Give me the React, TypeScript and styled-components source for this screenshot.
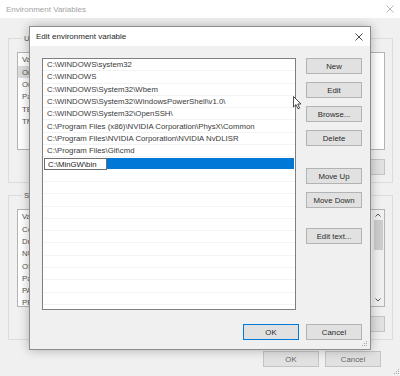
import React from 'react'
import styled, { createGlobalStyle } from 'styled-components'

const userVars = ['OneDrive', 'OneDriveConsumer', 'Path', 'TEMP', 'TMP']

const systemVars = [
  'ComSpec',
  'DriverData',
  'NUMBER_OF_PROCESSORS',
  'OS',
  'Path',
  'PATHEXT',
  'PROCESSOR_ARCHITECTURE',
]

const paths = [
  'C:\\WINDOWS\\system32',
  'C:\\WINDOWS',
  'C:\\WINDOWS\\System32\\Wbem',
  'C:\\WINDOWS\\System32\\WindowsPowerShell\\v1.0\\',
  'C:\\WINDOWS\\System32\\OpenSSH\\',
  'C:\\Program Files (x86)\\NVIDIA Corporation\\PhysX\\Common',
  'C:\\Program Files\\NVIDIA Corporation\\NVIDIA NvDLISR',
  'C:\\Program Files\\Git\\cmd',
]

const EMPTY_ROWS = 12

const CloseIcon = ({ color }: { color: string }) => (
  <svg width="8" height="8" viewBox="0 0 8 8">
    <path d="M0.5 0.5 L7.5 7.5 M7.5 0.5 L0.5 7.5" stroke={color} strokeWidth="0.9" />
  </svg>
)

const Grip = () => (
  <svg width="6" height="6" viewBox="0 0 6 6">
    <g fill="#a8a8a8">
      <rect x="4" y="0" width="1" height="1" />
      <rect x="2" y="2" width="1" height="1" />
      <rect x="4" y="2" width="1" height="1" />
      <rect x="0" y="4" width="1" height="1" />
      <rect x="2" y="4" width="1" height="1" />
      <rect x="4" y="4" width="1" height="1" />
    </g>
  </svg>
)

const Chevron = ({ up }: { up?: boolean }) => (
  <svg width="6" height="4" viewBox="0 0 6 4">
    <path d={up ? 'M0.5 3.5 L3 1 L5.5 3.5' : 'M0.5 0.5 L3 3 L5.5 0.5'} stroke="#555" strokeWidth="1" fill="none" />
  </svg>
)

const Pointer = () => (
  <svg width="10" height="14" viewBox="0 0 10 14">
    <path
      d="M0.5 0.5 L0.5 11 L3 8.6 L5 12.8 L6.6 12.1 L4.7 8 L8 8 Z"
      fill="#fff"
      stroke="#222"
      strokeWidth="0.8"
      strokeLinejoin="round"
    />
  </svg>
)

export default function App() {
  return (
    <Desktop>
      <GlobalStyle />
      <BgWindow>
        <BgTitleBar>
          <span>Environment Variables</span>
          <CloseIcon color="#b0b0b0" />
        </BgTitleBar>
        <BgBody>
          <Group>
            <Legend>User variables</Legend>
            <VarList>
              <VarListBody>
                <HeaderRow>
                  <VarCell>Variable</VarCell>
                </HeaderRow>
                {userVars.map((name, i) => (
                  <VarRow key={name}>
                    <VarCell $selected={i === 0}>{name}</VarCell>
                  </VarRow>
                ))}
              </VarListBody>
            </VarList>
            <GroupButtons>
              <BgButton>Delete</BgButton>
            </GroupButtons>
          </Group>
          <Group $spaced>
            <Legend>System variables</Legend>
            <VarList>
              <VarListBody>
                <HeaderRow>
                  <VarCell>Variable</VarCell>
                </HeaderRow>
                {systemVars.map(name => (
                  <VarRow key={name}>
                    <VarCell>{name}</VarCell>
                  </VarRow>
                ))}
              </VarListBody>
              <ScrollBar>
                <Chevron up />
                <Thumb />
                <ScrollSpacer />
                <Chevron />
              </ScrollBar>
            </VarList>
            <GroupButtons>
              <BgButton>Delete</BgButton>
            </GroupButtons>
          </Group>
          <BgFooter>
            <BgButton>OK</BgButton>
            <BgButton>Cancel</BgButton>
          </BgFooter>
        </BgBody>
        <CornerGrip $right={0} $bottom={1}>
          <Grip />
        </CornerGrip>
      </BgWindow>

      <Dialog>
        <DialogTitleBar>
          <span>Edit environment variable</span>
          <CloseIcon color="#333" />
        </DialogTitleBar>
        <DialogBody>
          <MainRow>
            <PathList>
              {paths.map(p => (
                <PathRow key={p}>{p}</PathRow>
              ))}
              <EditRow>
                <EditBox>C:\MinGW\bin</EditBox>
                <SelectionFill />
              </EditRow>
              {Array.from({ length: EMPTY_ROWS }).map((_, i) => (
                <PathRow key={i} />
              ))}
            </PathList>
            <ButtonColumn>
              <WinButton>New</WinButton>
              <WinButton>Edit</WinButton>
              <WinButton>Browse...</WinButton>
              <WinButton>Delete</WinButton>
              <WinButton $push={14}>Move Up</WinButton>
              <WinButton>Move Down</WinButton>
              <WinButton $push={12}>Edit text...</WinButton>
            </ButtonColumn>
          </MainRow>
          <DialogFooter>
            <WinButton $default>OK</WinButton>
            <WinButton>Cancel</WinButton>
          </DialogFooter>
        </DialogBody>
        <CornerGrip $right={2} $bottom={2}>
          <Grip />
        </CornerGrip>
      </Dialog>

      <MouseCursor>
        <Pointer />
      </MouseCursor>
    </Desktop>
  )
}

const GlobalStyle = createGlobalStyle`
  html, body {
    margin: 0;
    padding: 0;
    background: #f0f0f0;
  }
  body {
    font-family: 'Liberation Sans', Arial, sans-serif;
    font-size: 7.8px;
    color: #333;
  }
  * {
    box-sizing: border-box;
  }
`

const Desktop = styled.div`
  position: relative;
  width: 400px;
  height: 376px;
  overflow: hidden;
  background: #f0f0f0;
`

const BgWindow = styled.div`
  position: relative;
  display: flex;
  flex-direction: column;
  height: 100%;
`

const BgTitleBar = styled.div`
  flex: 0 0 18px;
  display: flex;
  align-items: center;
  justify-content: space-between;
  padding: 0 6px 0 6px;
  background: #fff;
  color: #a3a3a3;
  font-size: 8px;
`

const BgBody = styled.div`
  flex: 1;
  display: flex;
  flex-direction: column;
  padding: 16px 7px 0 8px;
`

const Group = styled.fieldset<{ $spaced?: boolean }>`
  margin: ${p => (p.$spaced ? '8px' : '0')} 0 0 0;
  padding: 9px 7px 7px 8px;
  border: 1px solid #dcdcdc;
  min-width: 0;
  display: flex;
  flex-direction: column;
`

const Legend = styled.legend`
  padding: 0 2px;
  margin-left: 5px;
  line-height: 9px;
  color: #555;
`

const VarList = styled.div`
  height: 98px;
  display: flex;
  background: #fff;
  border: 1px solid #b4b4b4;
  overflow: hidden;
`

const VarListBody = styled.div`
  flex: 1;
  overflow: hidden;
`

const HeaderRow = styled.div`
  height: 13px;
  display: flex;
  align-items: center;
  color: #555;
  white-space: nowrap;
`

const VarRow = styled.div`
  height: 12.3px;
  display: flex;
  color: #555;
  white-space: nowrap;
`

const VarCell = styled.span<{ $selected?: boolean }>`
  width: 110px;
  flex: none;
  display: flex;
  align-items: center;
  padding-left: 4px;
  background: ${p => (p.$selected ? '#dcdcdc' : 'transparent')};
`

const ScrollBar = styled.div`
  width: 12px;
  display: flex;
  flex-direction: column;
  align-items: center;
  padding: 3px 1px 4px;
  background: #f0f0f0;
`

const Thumb = styled.div`
  width: 9px;
  height: 30px;
  margin-top: 3px;
  background: #cdcdcd;
`

const ScrollSpacer = styled.div`
  flex: 1;
`

const GroupButtons = styled.div`
  display: flex;
  justify-content: flex-end;
  gap: 6px;
  margin-top: 9px;
`

const BgButton = styled.button`
  width: 56px;
  height: 16px;
  padding: 0;
  background: #e1e1e1;
  border: 1px solid #c4c4c4;
  font: inherit;
  color: #666;
`

const BgFooter = styled.div`
  display: flex;
  justify-content: flex-end;
  gap: 6px;
  margin-top: 11px;
  padding-right: 12px;
`

const CornerGrip = styled.div<{ $right: number; $bottom: number }>`
  position: absolute;
  right: ${p => p.$right}px;
  bottom: ${p => p.$bottom}px;
  display: flex;
`

const Dialog = styled.div`
  position: absolute;
  left: 29px;
  top: 26px;
  width: 342px;
  height: 324px;
  display: flex;
  flex-direction: column;
  background: #f0f0f0;
  border: 1px solid #8c8c8c;
  box-shadow: 0 0 10px rgba(0, 0, 0, 0.28);
`

const DialogTitleBar = styled.div`
  flex: 0 0 19px;
  display: flex;
  align-items: center;
  justify-content: space-between;
  padding: 0 7px 0 6px;
  background: #fff;
  color: #1e1e1e;
  font-size: 8px;
`

const DialogBody = styled.div`
  flex: 1;
  display: flex;
  flex-direction: column;
  padding: 12px 8px 0 12px;
`

const MainRow = styled.div`
  display: flex;
  gap: 10px;
`

const PathList = styled.div`
  width: 254px;
  height: 252px;
  background: #fff;
  border: 1px solid #7f7f7f;
  overflow: hidden;
`

const PathRow = styled.div`
  height: 12.3px;
  display: flex;
  align-items: center;
  padding-left: 4px;
  border-bottom: 1px solid #f3f3f3;
  color: #3a3a3a;
  white-space: nowrap;
`

const EditRow = styled.div`
  height: 12.3px;
  display: flex;
  padding: 1px 1px 0 1px;
`

const EditBox = styled.div`
  width: 63px;
  display: flex;
  align-items: center;
  padding-left: 3px;
  background: #fff;
  border: 1px solid #6e6e6e;
  color: #222;
  white-space: nowrap;
`

const SelectionFill = styled.div`
  flex: 1;
  margin-bottom: 1px;
  background: #0078d7;
`

const ButtonColumn = styled.div`
  width: 56px;
  display: flex;
  flex-direction: column;
  gap: 8px;
`

const WinButton = styled.button<{ $default?: boolean; $push?: number }>`
  width: 56px;
  height: 16px;
  flex: none;
  padding: 0;
  margin-top: ${p => p.$push ?? 0}px;
  background: #e1e1e1;
  border: 1px solid ${p => (p.$default ? '#0078d7' : '#b3b3b3')};
  font: inherit;
  color: #2a2a2a;
`

const DialogFooter = styled.div`
  display: flex;
  justify-content: flex-end;
  gap: 7px;
  margin-top: 14px;
`

const MouseCursor = styled.div`
  position: absolute;
  left: 293px;
  top: 96px;
  display: flex;
`
